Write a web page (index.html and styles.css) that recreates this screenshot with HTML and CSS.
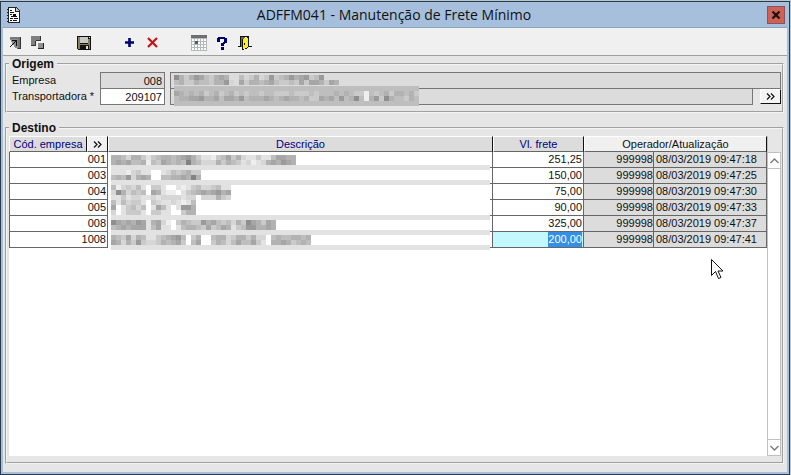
FILE: index.html
```
<!DOCTYPE html>
<html lang="pt-BR">
<head>
    <meta charset="UTF-8">
    <meta name="viewport" content="width=device-width, initial-scale=1.0">
    <title>ADFFM041 - Manutenção de Frete Mínimo</title>
    <link rel="stylesheet" href="styles.css">
</head>
<body>

<div class="window">
    <header class="titlebar">
        <svg class="app-icon" width="14" height="16" viewBox="0 0 14 16" shape-rendering="crispEdges">
            <path d="M1 0h8l4 4v12H1z" fill="#222"/>
            <path d="M2 1h6v4h4v10H2z" fill="#fff"/>
            <path d="M9 1l3 3H9z" fill="#ccc"/>
            <path d="M3 3h2v1H3zM3 5h4v1H3zM3 7h2v1H3zM6 7h3v2H6zM4 9h6v1H4zM3 11h3v1H3zM7 11h4v1H7zM3 13h2v1H3zM6 13h4v1H6z" fill="#111"/>
            <path d="M0 2h2v1H0zM0 5h2v1H0zM0 8h2v1H0zM0 11h2v1H0zM0 14h2v1H0z" fill="#222"/>
        </svg>
        <h1>ADFFM041 - Manutenção de Frete Mínimo</h1>
        <button class="close" type="button" aria-label="Fechar">
            <svg width="10" height="8" viewBox="0 0 10 8"><path d="M1.5 0.5l7 7M8.500 0.5l-7 7" stroke="#1c1010" stroke-width="2.200"/></svg>
        </button>
    </header>

    <nav class="toolbar">
        <div class="group">
            <button type="button" aria-label="Abrir">
                <svg width="16" height="16" viewBox="0 0 16 16" shape-rendering="crispEdges">
                    <path d="M3 2h11v12h-4V5H3z" fill="#777"/>
                    <path d="M3 4h8v9H8z" fill="#8c8c8c"/>
                    <path d="M13 2h1v12h-3v-1h2z" fill="#333"/>
                    <path d="M5 5h5v6H9V7H8v1H7v1H6v1H5v1H4v1H3v-1h1v-1h1V9h1V8h1V7h1V6H5z" fill="#111"/>
                </svg>
            </button>
            <button type="button" aria-label="Detalhes">
                <svg width="16" height="16" viewBox="0 0 16 16" shape-rendering="crispEdges">
                    <path d="M1 1h10v5H6v5H1z" fill="#808080"/>
                    <path d="M1 10h5v1H1zM10 1h1v5h-1zM6 5h4v1H6zM5 6h1v5H5z" fill="#333"/>
                    <path d="M8 8h6v6H8z" fill="#909090"/>
                    <path d="M13 8h1v6H8v-1h5z" fill="#222"/>
                </svg>
            </button>
        </div>
        <div class="group">
            <button type="button" aria-label="Salvar">
                <svg width="16" height="16" viewBox="0 0 16 16" shape-rendering="crispEdges">
                    <path d="M1 1h14v14H2l-1-1z" fill="#111"/>
                    <path d="M2 2h2v7h8V4h2v10H2z" fill="#84825a"/>
                    <path d="M4 2h8v6H4z" fill="#c8c8c8"/>
                    <path d="M13 2h1v1h-1z" fill="#eee"/>
                    <path d="M4 10h9v4H4z" fill="#111"/>
                    <path d="M10 11h2v3h-2z" fill="#ddd"/>
                </svg>
            </button>
        </div>
        <div class="group">
            <button type="button" aria-label="Incluir">
                <svg width="16" height="16" viewBox="0 0 16 16"><path d="M3 7.500h9M7.500 3v9" stroke="#000070" stroke-width="2.600"/></svg>
            </button>
            <button type="button" aria-label="Excluir">
                <svg width="16" height="16" viewBox="0 0 16 16"><path d="M3 3l9 9M12 3l-9 9" stroke="#c41414" stroke-width="2.200"/></svg>
            </button>
        </div>
        <div class="group">
            <button type="button" aria-label="Calendário">
                <svg width="16" height="16" viewBox="0 0 16 16" shape-rendering="crispEdges">
                    <path d="M0 0h16v16H0z" fill="#b4b8b8"/>
                    <path d="M0 0h16v3H0z" fill="#6c7074"/>
                    <path d="M1 4h2v2H1zM4 4h2v2H4zM7 4h2v2H7zM10 4h2v2h-2zM13 4h2v2h-2zM1 7h2v2H1zM7 7h2v2H7zM10 7h2v2h-2zM13 7h2v2h-2zM1 10h2v2H1zM4 10h2v2H4zM7 10h2v2H7zM10 10h2v2h-2zM13 10h2v2h-2zM1 13h2v2H1zM4 13h2v2H4zM7 13h2v2H7zM10 13h2v2h-2zM13 13h2v2h-2z" fill="#fff"/>
                    <path d="M4 6h3v3H4z" fill="#456070"/>
                </svg>
            </button>
            <button type="button" aria-label="Ajuda">
                <svg width="16" height="16" viewBox="0 0 16 16" shape-rendering="crispEdges">
                    <path d="M4 2h7v1h2v5h-2v1h-1v2H7V8h2V7h1V4H6v3H3V3h1zM7 12h3v3H7z" fill="#000070"/>
                </svg>
            </button>
            <button type="button" aria-label="Sair">
                <svg width="16" height="16" viewBox="0 0 16 16" shape-rendering="crispEdges">
                    <path d="M3 1h9v10h3v1h-4V2H4v10H1v-1h2z" fill="#111"/>
                    <path d="M4 2h4v10H4z" fill="#666"/>
                    <path d="M5 4l6-2v11l-5 2H5z" fill="#111"/>
                    <path d="M6 4h1V3h4v9h-1v1H8v1H6z" fill="#ffee22"/>
                    <path d="M7 8h1v2H7z" fill="#111"/>
                </svg>
            </button>
        </div>
    </nav>

    <main class="content">
        <fieldset class="origem">
            <legend>Origem</legend>
            <div class="fields">
                <label for="empresa">Empresa</label>
                <input class="code" type="text" id="empresa" value="008" readonly>
                <div class="name wide"><svg class="mosaic" data-name="empresa"></svg></div>

                <label for="transportadora">Transportadora *</label>
                <input class="code" type="text" id="transportadora" value="209107">
                <div class="name"><svg class="mosaic tall" data-name="transportadora"></svg></div>
                <button class="lookup" type="button" aria-label="Buscar transportadora">
                    <svg width="9" height="7" viewBox="0 0 9 7"><path d="M1 0.500l3 3-3 3M5 0.500l3 3-3 3" fill="none" stroke="#111" stroke-width="1.200"/></svg>
                </button>
            </div>
        </fieldset>

        <fieldset class="destino">
            <legend>Destino</legend>
            <div class="grid">
                <div class="grid-body">
                    <table>
                        <colgroup>
                            <col class="col-code">
                            <col class="col-lookup">
                            <col>
                            <col class="col-frete">
                            <col class="col-oper">
                            <col class="col-date">
                        </colgroup>
                        <thead>
                            <tr>
                                <th>Cód. empresa</th>
                                <th class="raised">
                                    <button type="button" aria-label="Buscar empresa">
                                        <svg width="9" height="7" viewBox="0 0 9 7"><path d="M1 0.500l3 3-3 3M5 0.500l3 3-3 3" fill="none" stroke="#111" stroke-width="1.200"/></svg>
                                    </button>
                                </th>
                                <th>Descrição</th>
                                <th>Vl. frete</th>
                                <th class="raised" colspan="2">Operador/Atualização</th>
                            </tr>
                        </thead>
                        <tbody id="rows"></tbody>
                    </table>
                </div>
                <div class="scrollbar">
                    <button type="button" aria-label="Rolar para cima">
                        <svg width="9" height="6" viewBox="0 0 9 6"><path d="M0.500 5l4-4 4 4" fill="none" stroke="#777" stroke-width="1.300"/></svg>
                    </button>
                    <button type="button" aria-label="Rolar para baixo">
                        <svg width="9" height="6" viewBox="0 0 9 6"><path d="M0.500 1l4 4 4-4" fill="none" stroke="#777" stroke-width="1.300"/></svg>
                    </button>
                </div>
            </div>
        </fieldset>
    </main>
</div>

<svg class="cursor" width="13" height="21" viewBox="0 0 13 21">
    <path d="M0.500 0.500v16l4-4 3 7 2.500-1-3-6.500h5z" fill="#fff" stroke="#111"/>
</svg>

<script>
const rows = [
    ['001', '251,25', '08/03/2019 09:47:18'],
    ['003', '150,00', '08/03/2019 09:47:25'],
    ['004', '75,00', '08/03/2019 09:47:30'],
    ['005', '90,00', '08/03/2019 09:47:33'],
    ['008', '325,00', '08/03/2019 09:47:37'],
    ['1008', '200,00', '08/03/2019 09:47:41']
];

// Hidden names: one digit per 5px block, 0 is the darkest, "-" is a full-width band
const masks = {
    empresa: [
        '14642356434  57647626542432652',
        '546645564427 36445435665636334634'
    ],
    transportadora: [
        '5555555555555555555555555555555555555555555555555',
        '3454546546546565565566656665655545456695654644546',
        '5443324435334254443454344546634352541594261455645',
        '5555555555555555555555555555555555555555555555555'
    ],
    descricao: [
        '4457446865445432468896536478868853344',
        '4343554956345450457774645687987434234',
        '-',
        '88897688  87565466',
        '54527434  55443404',
        '-',
        '5976758 668  89865776588',
        '7147565 34899 8654343243',
        '88687788787777877 777467',
        '5857668 678878985',
        '3 86575 8358 8224',
        '7 86668 6688  644',
        '-',
        '134342384379 64566243565746134634',
        '543433385388 85445636534865224434',
        '-',
        '456374588654325 64  54476446477 54554454',
        '347462677645436 53  64575355368 44346545',
        '-'
    ]
};

function drawMosaic(svg) {
    const size = 5;
    masks[svg.dataset.name].forEach((line, y) => {
        const cells = line === '-' ? ['8'] : line.split('');
        cells.forEach((cell, x) => {
            if (cell === ' ') return;
            const gray = 130 + Number(cell) * 12;
            const rect = document.createElementNS('http://www.w3.org/2000/svg', 'rect');
            rect.setAttribute('x', x * size);
            rect.setAttribute('y', y * size);
            rect.setAttribute('width', line === '-' ? '100%' : size);
            rect.setAttribute('height', size);
            rect.setAttribute('fill', `rgb(${gray}, ${gray}, ${gray})`);
            svg.appendChild(rect);
        });
    });
}

// Render the grid rows
document.getElementById('rows').innerHTML = rows.map(([code, value, date], i) => `
    <tr>
        <td colspan="2"><input type="text" aria-label="Cód. empresa" value="${code}"></td>
        <td class="descricao">${i === 0 ? '<div class="cover"><svg class="mosaic" data-name="descricao"></svg></div>' : ''}</td>
        <td><input type="text" aria-label="Vl. frete" class="frete" value="${value}"></td>
        <td class="locked">999998</td>
        <td class="locked date">${date}</td>
    </tr>
`).join('');

document.querySelectorAll('.mosaic').forEach(drawMosaic);

// Start editing the last value
const fretes = document.querySelectorAll('.frete');
fretes[fretes.length - 1].focus();
fretes[fretes.length - 1].select();
</script>

</body>
</html>
```
FILE: styles.css
```
* {
    box-sizing: border-box;
}
body {
    margin: 0;
    padding: 1px 1px 0 0;
    min-height: 100vh;
    display: flex;
    background-color: #b9c8d0;
    font-family: "Liberation Sans", Arial, sans-serif;
    font-size: 11px;
    color: #111;
}
button {
    margin: 0;
    padding: 0;
    border: none;
    background: none;
    display: flex;
    align-items: center;
    justify-content: center;
}
input {
    font: inherit;
    color: inherit;
    margin: 0;
    min-width: 0;
    border-radius: 0;
    outline: none;
    text-align: right;
}
.window {
    flex: 1;
    display: flex;
    flex-direction: column;
    border: 1px solid #2b3b4b;
    background-color: #a6bfdc;
}
.titlebar {
    display: flex;
    align-items: center;
    height: 25px;
    padding: 0 4px 0 6px;
}
.titlebar h1 {
    flex: 1;
    margin: 0;
    font-family: "Open Sans", "Noto Sans", sans-serif;
    font-size: 14px;
    font-weight: normal;
    line-height: 24px;
    text-align: center;
}
.close {
    width: 18px;
    height: 18px;
    background-color: #cd6155;
    border: 1px solid #8a5558;
}
.toolbar {
    display: flex;
    gap: 23px;
    height: 29px;
    margin: 0 2px;
    background-color: #f0f0f0;
    border-top: 1px solid #8fa3bb;
    border-bottom: 1px solid #a0a0a0;
}
.group {
    display: flex;
}
.group button {
    width: 23px;
    padding-top: 2px;
}
.content {
    flex: 1;
    display: flex;
    flex-direction: column;
    gap: 8px;
    margin: 0 2px 2px;
    padding: 1px 3px 8px 2px;
    background-color: #e6e6e6;
}
fieldset {
    margin: 0;
    min-width: 0;
    border: 2px groove #f4f4f4;
}
legend {
    padding: 0 3px;
    font-size: 12px;
    font-weight: bold;
    line-height: 14px;
}
.origem {
    padding: 0 1px 6px 2px;
}
.fields {
    display: grid;
    grid-template-columns: 88px 65px 1fr 28px;
    grid-auto-rows: 16px;
    padding: 1px 0 1px 3px;
}
.fields label {
    line-height: 16px;
}
.code {
    height: 17px;
    padding: 0 2px;
    border: 1px solid #777;
    background-color: #fff;
}
.code:read-only {
    background-color: #dcdcdc;
}
.name {
    height: 17px;
    margin-left: 5px;
    padding: 2px 0 0 3px;
    border: 1px solid #777;
    background-color: #dcdcdc;
}
.wide {
    grid-column: span 2;
}
.mosaic {
    display: block;
    width: 100%;
    height: 100%;
    shape-rendering: crispEdges;
}
/* Covers the whole field, borders included */
.mosaic.tall {
    height: 20px;
    margin-top: -5px;
}
.lookup {
    justify-self: end;
    align-self: end;
    width: 21px;
    height: 15px;
    background-color: #f4f4f4;
    border: 1px solid;
    border-color: #fff #111 #111 #fff;
}
.destino {
    flex: 1;
    display: flex;
    padding: 1px 1px 6px 2px;
}
.grid {
    flex: 1;
    display: flex;
}
.grid-body {
    flex: 1;
    background-color: #fff;
}
table {
    width: 100%;
    table-layout: fixed;
    border-collapse: separate;
    border-spacing: 0;
}
.col-code {
    width: 78px;
}
.col-lookup {
    width: 21px;
}
.col-frete {
    width: 91px;
}
.col-oper {
    width: 70px;
}
.col-date {
    width: 113px;
}
th {
    height: 16px;
    padding: 0;
    font-weight: normal;
    line-height: 14px;
    color: #000080;
    background-color: #dcdcdc;
    border-top: 1px solid #fff;
    border-left: 1px solid #fff;
    border-right: 1px solid #111;
    border-bottom: 1px solid #666;
}
th.raised {
    color: #111;
    background-color: #f0f0f0;
}
th button {
    width: 100%;
    height: 14px;
}
td {
    height: 16px;
    padding: 0;
    line-height: 15px;
    text-align: right;
    background-color: #fff;
    border-right: 1px solid #666;
    border-bottom: 1px solid #666;
}
td:first-child {
    border-left: 1px solid #666;
}
td input {
    display: block;
    width: 100%;
    height: 15px;
    padding: 0 1px;
    border: none;
    background: none;
}
td input:focus {
    background-color: #c4f8ff;
}
td input::selection {
    color: #fff;
    background-color: #3390e8;
}
td.locked {
    background-color: #dcdcdc;
}
td.date {
    padding-left: 2px;
    text-align: left;
}
.descricao {
    position: relative;
}
.cover {
    position: absolute;
    z-index: 1;
    top: 0;
    left: 0;
    right: 2px;
    height: 98px;
    padding: 3px 0 0 3px;
    background-color: #fff;
}
.scrollbar {
    display: flex;
    flex-direction: column;
    justify-content: space-between;
    width: 13px;
    margin-top: 16px;
    background-color: #fff;
    border: 1px solid #c0c0c0;
    border-left: none;
}
.scrollbar button {
    height: 16px;
    border-bottom: 1px solid #c0c0c0;
}
.scrollbar button:last-child {
    border-top: 1px solid #c0c0c0;
    border-bottom: none;
}
.grid-body {
    border-right: 1px solid #c0c0c0;
}
.cursor {
    position: absolute;
    left: 711px;
    top: 259px;
}
```
